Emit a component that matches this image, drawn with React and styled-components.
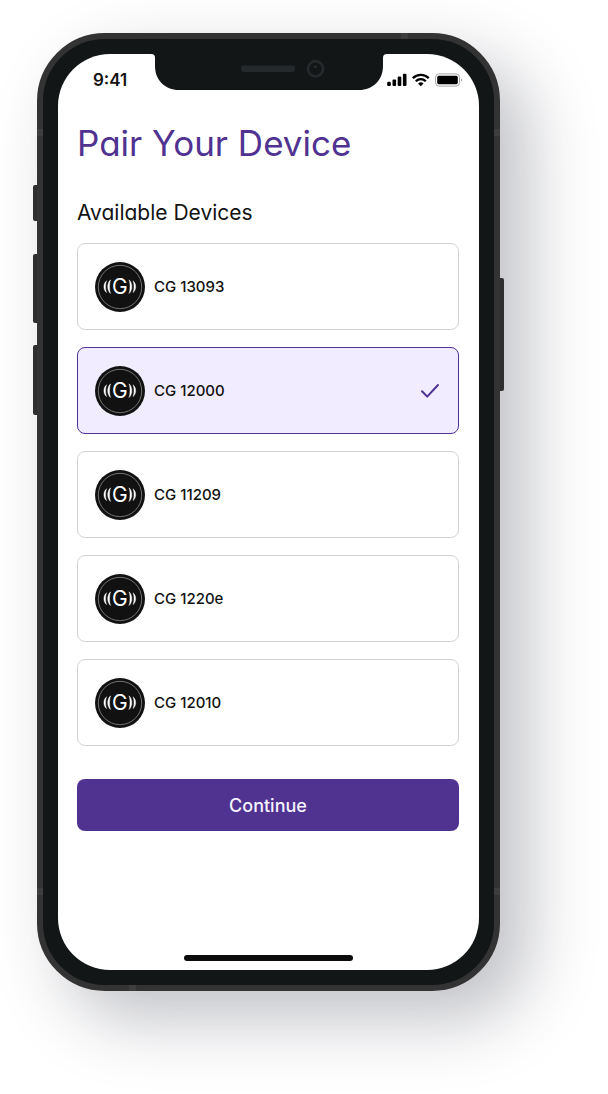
import React, { useState } from "react";
import styled, { createGlobalStyle, css } from "styled-components";

const GlobalStyle = createGlobalStyle`
  *, *::before, *::after {
    box-sizing: border-box;
  }
  body {
    margin: 0;
    background: #fff;
    color: #121212;
    font-family: Inter, "Open Sans", sans-serif;
    font-feature-settings: "cv11";
  }
`;

const Page = styled.div`
  min-height: 100vh;
  padding: 33px 108px 103px 37px;
  overflow: hidden;
`;

const Phone = styled.div`
  position: relative;
  padding: 15px;
  background: #121617;
  border: 6px solid #333333;
  border-radius: 68px;
  box-shadow: 28px 28px 68px rgba(30, 34, 50, 0.28);
`;

/* hardware keys on the edges */
const Key = styled.span`
  position: absolute;
  top: ${({ $top }) => $top}px;
  ${({ $side }) => $side}: -10px;
  width: 4px;
  height: ${({ $height }) => $height}px;
  background: #2f2f2f;
  border-radius: ${({ $side }) => ($side === "left" ? "2px 0 0 2px" : "0 2px 2px 0")};
`;

/* antenna lines in the metal frame */
const Band = styled.span`
  position: absolute;
  background: #3e3e3e;
  ${({ $edge, $at }) =>
    $edge === "left" || $edge === "right"
      ? css`
          ${$edge}: -6px;
          ${$at};
          width: 6px;
          height: 7px;
        `
      : css`
          ${$edge}: -6px;
          ${$at};
          width: 7px;
          height: 6px;
        `}
`;

const Notch = styled.svg`
  position: absolute;
  top: 14px;
  left: 50%;
  transform: translateX(-50%);
`;

const Screen = styled.div`
  display: flex;
  flex-direction: column;
  background: #fff;
  border-radius: 52px;
  overflow: hidden;
`;

const StatusBar = styled.div`
  display: flex;
  align-items: center;
  justify-content: space-between;
  height: 52px;
  padding: 0 16px 0 35px;
`;

const Time = styled.span`
  font-size: 17px;
  font-weight: 600;
  line-height: 20px;
`;

const Main = styled.form`
  display: flex;
  flex-direction: column;
  padding: 12px 20px 124px 19px;
`;

const Title = styled.h1`
  margin: 0 0 32px;
  font-size: 35px;
  font-weight: 400;
  line-height: 50px;
  color: #503291;
`;

const Devices = styled.fieldset`
  display: flex;
  flex-direction: column;
  gap: 17px;
  min-width: 0;
  margin: 0 0 33px;
  padding: 0;
  border: none;
`;

const Legend = styled.legend`
  margin-bottom: 17px;
  padding: 0;
  font-size: 21px;
  line-height: 26px;
`;

const DeviceCard = styled.label`
  display: flex;
  align-items: center;
  gap: 9px;
  height: 87px;
  padding: 0 18px 0 17px;
  border: 1px solid ${({ $selected }) => ($selected ? "#503291" : "#d2d2d2")};
  border-radius: 8px;
  background: ${({ $selected }) => ($selected ? "#f1ecff" : "#fff")};
  cursor: pointer;
`;

const Radio = styled.input`
  position: absolute;
  opacity: 0;
  pointer-events: none;
`;

const DeviceName = styled.span`
  flex: 1;
  font-size: 15px;
  font-weight: 500;
  line-height: 20px;
`;

const ContinueButton = styled.button`
  height: 52px;
  border: none;
  border-radius: 8px;
  background: #503291;
  color: #f6f2ff;
  font: inherit;
  font-feature-settings: inherit;
  font-size: 18px;
  font-weight: 500;
  cursor: pointer;
`;

const HomeIndicator = styled.div`
  align-self: center;
  width: 40%;
  height: 6px;
  margin-bottom: 9px;
  border-radius: 3px;
  background: #0c0c0c;
`;

const devices = ["CG 13093", "CG 12000", "CG 11209", "CG 1220e", "CG 12010"];

const DeviceLogo = () => (
  <svg width="50" height="50" viewBox="0 0 50 50" aria-hidden="true">
    <circle cx="25" cy="25" r="25" fill="#111" />
    <circle cx="25" cy="25" r="21.7" fill="none" stroke="#8a8a8a" strokeWidth="0.8" />
    <g fill="#fff" stroke="#fff" strokeWidth="0.4">
      <path d="M15.6 17.8C11.8 20.8 11.8 28.6 15.6 31.6C14.2 28.2 14.2 21.2 15.6 17.8Z" />
      <path d="M11.6 18.8C8 21.4 8 28 11.6 30.6C10.2 27.8 10.2 21.6 11.6 18.8Z" />
      <path d="M34 17.8C37.8 20.8 37.8 28.6 34 31.6C35.4 28.2 35.4 21.2 34 17.8Z" />
      <path d="M38 18.8C41.6 21.4 41.6 28 38 30.6C39.4 27.8 39.4 21.6 38 18.8Z" />
    </g>
    <text
      x="24.8"
      y="32"
      textAnchor="middle"
      fontFamily="Inter, sans-serif"
      fontSize="21"
      fontWeight="400"
      fill="#fff"
    >
      G
    </text>
  </svg>
);

const CheckIcon = () => (
  <svg width="20" height="16" viewBox="0 0 20 16" fill="none" aria-hidden="true">
    <path d="M2 8.2L7.2 13.6L18 2" stroke="#503291" strokeWidth="2" strokeLinecap="round" strokeLinejoin="round" />
  </svg>
);

const StatusIcons = () => (
  <svg width="76" height="14" viewBox="0 0 76 14" aria-hidden="true">
    <rect x="0.2" y="8.8" width="3.6" height="4.2" rx="1" />
    <rect x="5.5" y="6.4" width="3.6" height="6.6" rx="1" />
    <rect x="10.7" y="3.6" width="3.6" height="9.4" rx="1" />
    <rect x="15.9" y="0.8" width="3.6" height="12.2" rx="1" />
    <g fill="none" stroke="#000" strokeWidth="2.3">
      <path d="M25.8 5.1C30.3 0.7 37.3 0.7 41.8 5.1" />
      <path d="M28.8 8.3C31.6 5.5 36 5.5 38.8 8.3" />
    </g>
    <path d="M31.1 10.4C32.7 8.9 34.9 8.9 36.5 10.4L33.8 13.2Z" />
    <rect x="48.5" y="0.9" width="24" height="12.2" rx="3.4" fill="none" stroke="#a6a6a6" />
    <rect x="50.2" y="2.8" width="20.6" height="8.4" rx="1.6" />
    <path d="M74 5.2C75.6 5.8 75.6 8.2 74 8.8Z" fill="#a6a6a6" />
  </svg>
);

const App = () => {
  const [selected, setSelected] = useState("CG 12000");

  return (
    <>
      <GlobalStyle />
      <Page>
        <Phone>
          <Key $side="left" $top={146} $height={36} />
          <Key $side="left" $top={215} $height={69} />
          <Key $side="left" $top={306} $height={70} />
          <Key $side="right" $top={239} $height={113} />
          <Band $edge="top" $at="right: 86px" />
          <Band $edge="bottom" $at="left: 86px" />
          <Band $edge="left" $at="top: 90px" />
          <Band $edge="right" $at="top: 90px" />
          <Band $edge="left" $at="bottom: 90px" />
          <Band $edge="right" $at="bottom: 90px" />

          <Screen>
            <StatusBar>
              <Time>9:41</Time>
              <StatusIcons />
            </StatusBar>

            <Main onSubmit={(e) => e.preventDefault()}>
              <Title>Pair Your Device</Title>
              <Devices>
                <Legend>Available Devices</Legend>
                {devices.map((name) => (
                  <DeviceCard key={name} $selected={name === selected}>
                    <Radio
                      type="radio"
                      name="device"
                      value={name}
                      checked={name === selected}
                      onChange={() => setSelected(name)}
                    />
                    <DeviceLogo />
                    <DeviceName>{name}</DeviceName>
                    {name === selected && <CheckIcon />}
                  </DeviceCard>
                ))}
              </Devices>
              <ContinueButton type="submit">Continue</ContinueButton>
            </Main>

            <HomeIndicator />
          </Screen>

          <Notch width="236" height="37" viewBox="0 0 236 37" aria-hidden="true">
            <path
              d="M0 0H236V1C233 1 232 2.5 232 5V13C232 27 222 37 208 37H28C14 37 4 27 4 13V5C4 2.5 3 1 0 1Z"
              fill="#121617"
            />
            <rect x="90" y="12.5" width="54" height="6.5" rx="3.2" fill="#24292b" />
            <circle cx="164.5" cy="15.7" r="7.6" fill="#121617" stroke="#262a2c" strokeWidth="2.6" />
            <circle cx="164.5" cy="13.8" r="1.2" fill="#2c3133" />
          </Notch>
        </Phone>
      </Page>
    </>
  );
};

export default App;
